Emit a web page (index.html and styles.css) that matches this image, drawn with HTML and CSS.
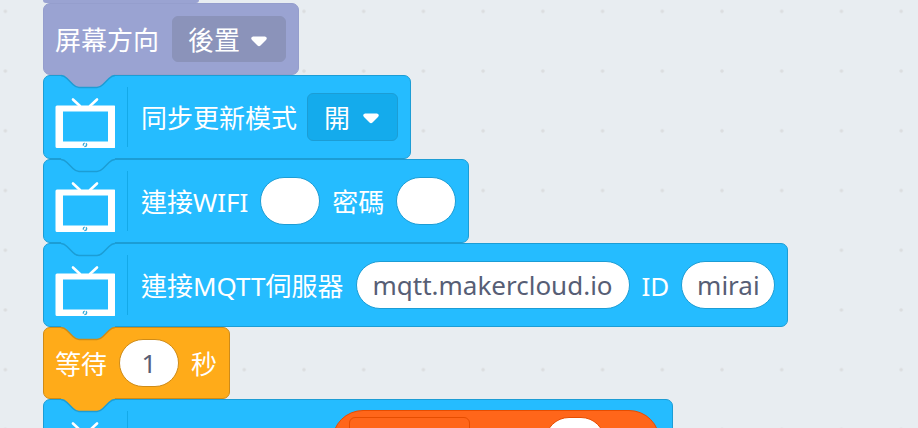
FILE: index.html
```html
<!DOCTYPE html>
<html lang="zh-Hant">
<head>
<meta charset="utf-8">
<title>Blocks</title>
<link rel="stylesheet" href="styles.css">
</head>
<body>
<svg class="defs" aria-hidden="true">
  <symbol id="notch" viewBox="0 -1 36 10">
    <path class="notch-fill" d="M0,-1 V0 c2,0 3,1 4,2 l4,4 c1,1 2,2 4,2 h12 c2,0 3,-1 4,-2 l4,-4 c1,-1 2,-2 4,-2 V-1 z"/>
    <path class="notch-line" d="M0,0 c2,0 3,1 4,2 l4,4 c1,1 2,2 4,2 h12 c2,0 3,-1 4,-2 l4,-4 c1,-1 2,-2 4,-2"/>
  </symbol>
  <symbol id="tv" viewBox="0 0 60 62">
    <path d="M18 13.500 L25 20 M42 13.500 L35 20" fill="none" stroke="#fff" stroke-width="2.600" stroke-linecap="round"/>
    <path fill="#fff" fill-rule="evenodd" d="M2 19.500 H59 Q60.500 19.500 60.500 21 V60.500 Q60.500 62 59 62 H2 Q.5 62 .5 60.500 V21 Q.5 19.500 2 19.500 z M8 25.500 V55.500 H53 V25.500 z"/>
    <circle cx="30" cy="58.800" r="1.700" fill="none" stroke="#38a9d8" stroke-width="1.300" stroke-dasharray="3 1"/>
  </symbol>
  <symbol id="arrow" viewBox="0 0 16 11">
    <path fill="#fff" d="M2 .5 H14 Q17 1.500 15 4 L9.500 9.500 Q8 11 6.500 9.500 L1 4 Q-1 1.500 2 .5 z"/>
  </symbol>
</svg>
<svg class="grid" aria-hidden="true">
  <defs>
    <pattern id="dots" width="40" height="40" patternUnits="userSpaceOnUse" patternTransform="translate(-24.500 -18.500) scale(1.493)">
      <circle cx="20" cy="20" r="1.200" fill="#dbdddf"/>
    </pattern>
  </defs>
  <rect width="100%" height="100%" fill="url(#dots)"/>
</svg>
<main class="stack">
  <div class="block muted stub"></div>
  <div class="block muted">
    <label for="direction">屏幕方向</label>
    <span class="dropdown"><select id="direction"><option>後置</option></select><svg class="arrow"><use href="#arrow"/></svg></span>
  </div>
  <div class="block screen after-muted">
    <svg class="notch"><use href="#notch"/></svg>
    <svg class="tv"><use href="#tv"/></svg><span class="rule"></span>
    <label for="sync">同步更新模式</label>
    <span class="dropdown"><select id="sync"><option>開</option></select><svg class="arrow"><use href="#arrow"/></svg></span>
  </div>
  <div class="block screen">
    <svg class="notch"><use href="#notch"/></svg>
    <svg class="tv"><use href="#tv"/></svg><span class="rule"></span>
    <label for="wifi">連接WIFI</label>
    <input id="wifi" type="text">
    <label for="password">密碼</label>
    <input id="password" type="text">
  </div>
  <div class="block screen">
    <svg class="notch"><use href="#notch"/></svg>
    <svg class="tv"><use href="#tv"/></svg><span class="rule"></span>
    <label for="server">連接MQTT伺服器</label>
    <input id="server" class="wide" type="text" value="mqtt.makercloud.io">
    <label for="client">ID</label>
    <input id="client" class="medium" type="text" value="mirai">
  </div>
  <div class="block control after-screen">
    <svg class="notch"><use href="#notch"/></svg>
    <label for="seconds">等待</label>
    <input id="seconds" type="text" value="1">
    <label for="seconds">秒</label>
  </div>
  <div class="block screen after-control">
    <svg class="notch"><use href="#notch"/></svg>
    <svg class="tv"><use href="#tv"/></svg><span class="rule"></span>
    <span class="spacer"></span>
    <div class="reporter">
      <select aria-label="變數"></select>
      <input type="text" aria-label="索引">
    </div>
  </div>
</main>
</body>
</html>
```

FILE: styles.css
```css
* {
  box-sizing: border-box;
}

body {
  margin: 0;
  height: 100vh;
  overflow: hidden;
  background: #e8edf1;
  color: #fff;
  font: 26px/36px "Noto Sans", "Noto Sans CJK TC", sans-serif;
}

.defs {
  position: absolute;
  width: 0;
  height: 0;
}

.grid {
  position: absolute;
  inset: 0;
  width: 100%;
  height: 100%;
}

.stack {
  position: relative;
  display: flex;
  flex-direction: column;
  align-items: flex-start;
  height: 100vh;
  overflow: hidden;
  padding-left: 43px;
}

.block {
  --fill: #25bcff;
  --line: #1c9dd5;
  --field: #14abec;
  --above: #25bcff;
  position: relative;
  display: flex;
  flex: none;
  align-items: center;
  gap: 12px;
  height: 84px;
  padding: 0 12px 0 11px;
  border: 1px solid var(--line);
  border-radius: 7px;
  background: var(--fill);
  white-space: nowrap;
}

.muted {
  --fill: #9aa3d2;
  --line: #959ecd;
  --field: #8b93ba;
  gap: 13px;
  height: 72px;
}

.stub {
  width: 156px;
  height: 3px;
  border-width: 0;
  border-radius: 0 0 6px 6px;
}

.control {
  --fill: #ffab19;
  --line: #cf8b17;
  height: 72px;
}

.after-muted {
  --above: #9aa3d2;
}

.after-screen {
  --above: #25bcff;
}

.after-control {
  --above: #ffab19;
}

.notch {
  position: absolute;
  top: -2px;
  left: 17px;
  width: 54px;
  height: 15px;
}

.notch-fill {
  fill: var(--above);
}

.notch-line {
  fill: none;
  stroke: var(--line);
}

.tv {
  width: 60px;
  height: 62px;
  overflow: visible;
}

.rule {
  width: 1px;
  height: 60px;
  margin-right: 1px;
  background: #14a9e8;
}

label {
  padding-top: 2px;
}

.dropdown {
  position: relative;
  display: flex;
}

.screen .dropdown {
  margin-left: -2px;
}

select,
input {
  height: 48px;
  margin: 0;
  border: 1px solid var(--line);
  font: inherit;
}

select {
  appearance: none;
  padding: 2px 46px 0 16px;
  border-radius: 6px;
  background: var(--field);
  color: #fff;
}

.muted select {
  height: 46px;
  padding: 2px 44px 0 15px;
  border-color: var(--field);
}

.arrow {
  position: absolute;
  top: 20px;
  right: 19px;
  width: 16px;
  height: 11px;
  pointer-events: none;
}

input {
  width: 60px;
  padding: 0;
  border-radius: 24px;
  background: #fff;
  color: #575e75;
  text-align: center;
}

.wide {
  width: 274px;
}

.medium {
  width: 94px;
}

.spacer {
  width: 179px;
}

.reporter {
  --line: #e64d00;
  --field: #ff661a;
  display: flex;
  align-items: center;
  justify-content: space-between;
  width: 328px;
  height: 62px;
  padding: 0 54px 0 16px;
  border: 1px solid var(--line);
  border-radius: 31px;
  background: #ff661a;
}

.reporter select {
  width: 121px;
}
```
